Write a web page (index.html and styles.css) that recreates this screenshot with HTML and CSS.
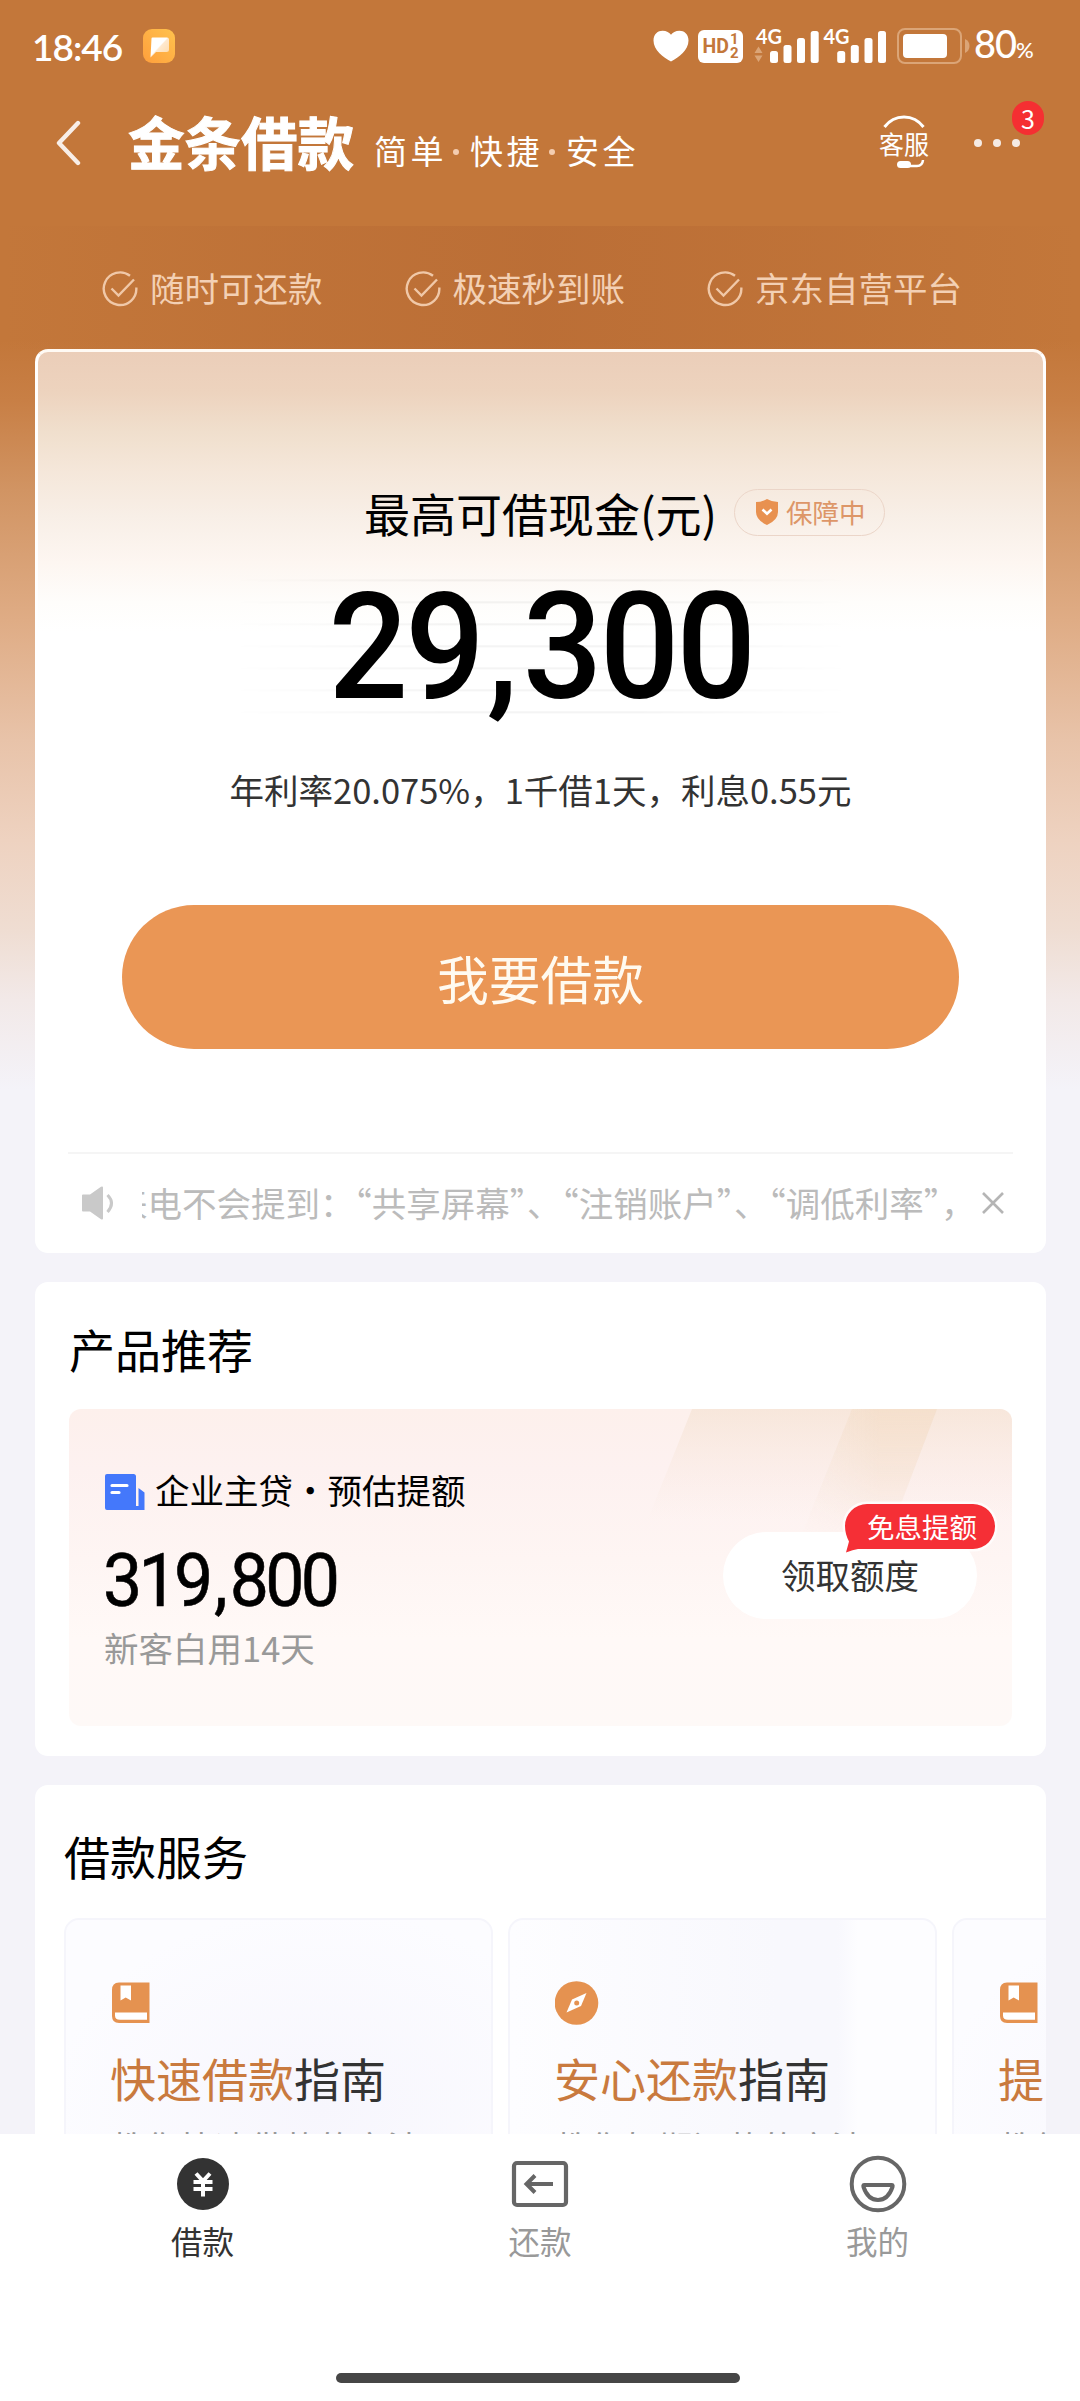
FILE: index.html
```html
<!DOCTYPE html>
<html lang="zh-CN">
<head>
<meta charset="utf-8">
<title>金条借款</title>
<link rel="stylesheet" href="styles.css">
</head>
<body>
<div class="screen">
  <main class="page">
    <div class="status">
      <span class="clock">18:46</span>
      <svg class="app-icon" width="32" height="34" viewBox="0 0 32 34">
        <defs>
          <linearGradient id="app" x1="0" y1="1" x2="1" y2="0"><stop offset="0" stop-color="#ff9f3c"/><stop offset="1" stop-color="#ffc24d"/></linearGradient>
          <linearGradient id="bub" x1="0" y1="0" x2="1" y2="1"><stop offset=".45" stop-color="#fff"/><stop offset=".5" stop-color="#ffe9cf"/><stop offset="1" stop-color="#ffd9a5"/></linearGradient>
        </defs>
        <rect width="32" height="34" rx="9" fill="url(#app)"/>
        <path d="M8.500 9.500Q8.500 8.500 9.500 8.500H24Q26 8.500 26 10.500V20.500Q26 23 23.500 23H13L7.500 28.500Z" fill="url(#bub)"/>
      </svg>
      <div class="status-right">
        <svg width="36" height="32" viewBox="0 0 36 32"><path d="M18 31.500C10 27.500 .5 20 .5 10.500C.5 4 5 .8 9.500 .8C13.500 .8 16.500 2.800 18 4.800C19.500 2.800 22.500 .8 26.500 .8C31 .8 35.500 4 35.500 10.500C35.500 20 26 27.500 18 31.500Z" fill="#fff"/></svg>
        <div class="hd"><span>HD</span><span class="hd-num"><i>1</i><i>2</i></span></div>
        <svg class="signals" width="133" height="36" viewBox="0 0 133 36">
          <g fill="#fff">
            <text class="net" x="2" y="16" textLength="26" lengthAdjust="spacingAndGlyphs">4G</text>
            <rect x="16" y="23" width="8" height="12" rx="2.500"/><rect x="29.500" y="17" width="8" height="18" rx="2.500"/><rect x="43" y="10" width="8" height="25" rx="2.500"/><rect x="56.700" y="3" width="8" height="32" rx="2.500"/>
            <text class="net" x="69.500" y="16" textLength="26" lengthAdjust="spacingAndGlyphs">4G</text>
            <rect x="83.200" y="23" width="8" height="12" rx="2.500"/><rect x="96.800" y="17" width="8" height="18" rx="2.500"/><rect x="110.500" y="10" width="8" height="25" rx="2.500"/><rect x="124" y="3" width="8" height="32" rx="2.500"/>
          </g>
          <path d="M4.500 18.500L8.500 25H.5ZM4.500 34L.5 27.500H8.500Z" fill="#dba577"/>
        </svg>
        <svg class="battery" width="73" height="36" viewBox="0 0 73 36">
          <rect x="1" y="1" width="63" height="34" rx="7" fill="none" stroke="#dba577" stroke-width="2"/>
          <rect x="6" y="6" width="44" height="24" rx="4" fill="#fff"/>
          <path d="M68 11Q72.500 13 72.500 18T68 25Z" fill="#dba577"/>
        </svg>
        <span class="percent">80<small>%</small></span>
      </div>
    </div>

    <header class="header">
      <svg class="back" width="26" height="46" viewBox="0 0 26 46"><path d="M23 3L4 23L23 43" fill="none" stroke="#f8eee7" stroke-width="4.400" stroke-linecap="round" stroke-linejoin="round"/></svg>
      <h1>金条借款</h1>
      <p class="slogan">简单<i></i>快捷<i></i>安全</p>
      <div class="service">
        <svg width="42" height="13" viewBox="0 0 42 13"><path d="M1.500 12Q9 2 21 2T40.500 12" fill="none" stroke="#fff" stroke-width="3"/></svg>
        <span>客服</span>
        <svg width="42" height="9" viewBox="0 0 42 9"><path d="M18 6H34Q39.500 6 40 0" fill="none" stroke="#fff" stroke-width="2.500"/><rect x="14" y="1" width="14" height="7" rx="3.500" fill="#fff"/></svg>
      </div>
      <div class="more"><i></i><i></i><i></i><b>3</b></div>
    </header>

    <ul class="features">
      <li><svg width="36" height="36" viewBox="0 0 36 36"><path d="M28 4.800A16.300 16.300 0 1 0 34.300 16.500M9.500 17.500L16.500 24.500L32 8.500"/></svg>随时可还款</li>
      <li><svg width="36" height="36" viewBox="0 0 36 36"><path d="M28 4.800A16.300 16.300 0 1 0 34.300 16.500M9.500 17.500L16.500 24.500L32 8.500"/></svg>极速秒到账</li>
      <li><svg width="36" height="36" viewBox="0 0 36 36"><path d="M28 4.800A16.300 16.300 0 1 0 34.300 16.500M9.500 17.500L16.500 24.500L32 8.500"/></svg>京东自营平台</li>
    </ul>

    <section class="card quota">
      <div class="quota-title">
        <h2>最高可借现金(元)</h2>
        <span class="guard"><svg width="24" height="26" viewBox="0 0 24 26"><path d="M1 3Q7 3 12 0Q17 3 23 3V13Q23 21 12 26Q1 21 1 13Z" fill="#e89150"/><path d="M7.500 10.500L12 14.800L16.500 10.500" fill="none" stroke="#fff" stroke-width="2.600"/></svg>保障中</span>
      </div>
      <div class="amount"><span class="digits">29<span class="comma">,</span>300</span></div>
      <p class="rate">年利率20.075%，1千借1天，利息0.55元</p>
      <a class="borrow">我要借款</a>
      <div class="notice">
        <svg class="speaker" width="36" height="34" viewBox="0 0 36 34"><path d="M1 9.500Q1 8.500 2 8.500H9L20 .8Q22 0 22 1.500V32.500Q22 34 20 33.200L9 25.500H2Q1 25.500 1 24.500Z" fill="#c9c9c9"/><path d="M26.500 9Q34.500 17 26.500 26" fill="none" stroke="#c9c9c9" stroke-width="3"/></svg>
        <div class="marquee"><span>来电不会提到：<q>“</q>共享屏幕<q>”</q>、<q>“</q>注销账户<q>”</q>、<q>“</q>调低利率<q>”</q>，</span></div>
        <svg class="close" width="24" height="24" viewBox="0 0 24 24"><path d="M2 2L22 22M22 2L2 22" stroke="#b5b5b5" stroke-width="2.600"/></svg>
      </div>
    </section>

    <section class="card products">
      <h2>产品推荐</h2>
      <div class="banner">
        <svg class="rays" width="430" height="150" viewBox="0 0 430 150">
          <defs>
            <linearGradient id="ray" x1="0" y1="0" x2="0" y2="1"><stop offset="0" stop-color="#efd9c2" stop-opacity=".4"/><stop offset=".75" stop-color="#f6e3d3" stop-opacity="0"/></linearGradient>
            <linearGradient id="ray2" x1="0" y1="0" x2="1" y2="0"><stop offset="0" stop-color="#f3dfca" stop-opacity=".1"/><stop offset=".6" stop-color="#f3dcc6" stop-opacity=".7"/></linearGradient>
            <linearGradient id="fade" x1="0" y1="0" x2="0" y2="1"><stop offset="0" stop-color="#fff"/><stop offset=".9" stop-color="#000"/></linearGradient>
            <mask id="down"><rect width="430" height="150" fill="url(#fade)"/></mask>
          </defs>
          <path d="M110 0H430V150H50Z" fill="url(#ray)"/>
          <path d="M270 0H355L298 150H210Z" fill="url(#ray2)" mask="url(#down)"/>
        </svg>
        <div class="offer">
          <p class="offer-name"><svg width="40" height="36" viewBox="0 0 40 36"><path d="M0 2Q0 0 2 0H28.500Q31 0 31 2.500V32H33.500V14L39.500 18.500V36H2Q0 36 0 34Z" fill="#4478fb"/><path d="M7 11.500H22M7 18.500H14" stroke="#fff" stroke-width="3.200" stroke-linecap="round"/></svg>企业主贷・预估提额</p>
          <p class="offer-sum">319<span class="comma">,</span>800</p>
          <p class="offer-note">新客白用14天</p>
        </div>
        <a class="claim">领取额度
          <span class="bubble"><svg width="156" height="54" viewBox="0 0 156 54"><path d="M25 3H131A22 22.500 0 0 1 131 48H16Q11 48.500 4 51.500Q5.500 46 7 40.500Q3 33 3 25A22 22 0 0 1 25 3Z" fill="#f52f36" stroke="#fff" stroke-opacity=".75" stroke-width="5" paint-order="stroke"/></svg><em>免息提额</em></span>
        </a>
      </div>
    </section>

    <section class="card services">
      <h2>借款服务</h2>
      <div class="guides">
        <article class="guide">
          <svg width="44" height="44" viewBox="0 0 44 44"><path d="M8 1.500H38.500V42H8Q1 42 1 35V9Q1 1.500 8 1.500Z" fill="#e59250"/><path d="M9.500 4.500H20V19.500L14.700 16.500L9.500 19.500ZM4 31.500H36V38.800H9Q4 38.800 4 34.500Z" fill="#fff"/></svg>
          <h3><b>快速借款</b>指南</h3><p>教你快速借款的方法</p>
        </article>
        <article class="guide alt">
          <svg width="44" height="44" viewBox="0 0 44 44"><circle cx="21.500" cy="22" r="21.800" fill="#e59250"/><path d="M31.500 12L26 25L11.500 31.500L17 18.500Z" fill="#fff"/><circle cx="21.700" cy="22" r="2.500" fill="#e59250"/></svg>
          <h3><b>安心还款</b>指南</h3><p>教你如期还款的方法</p>
        </article>
        <article class="guide">
          <svg width="44" height="44" viewBox="0 0 44 44"><path d="M8 1.500H38.500V42H8Q1 42 1 35V9Q1 1.500 8 1.500Z" fill="#e59250"/><path d="M9.500 4.500H20V19.500L14.700 16.500L9.500 19.500ZM4 31.500H36V38.800H9Q4 38.800 4 34.500Z" fill="#fff"/></svg>
          <h3><b>提</b></h3><p>教你</p>
        </article>
      </div>
    </section>
  </main>

  <nav class="tabbar">
    <div class="tabs">
      <a class="tab active"><svg width="58" height="58" viewBox="0 0 58 58"><circle cx="29" cy="29" r="26" fill="#333"/><path d="M22 18.500L29 26L36 18.500M29 26V41.500M19.500 27H38.500M19.500 34H38.500" fill="none" stroke="#fff" stroke-width="4"/></svg>借款</a>
      <a class="tab"><svg width="58" height="58" viewBox="0 0 58 58"><rect x="3" y="8" width="52" height="42" rx="3" fill="none" stroke="#666" stroke-width="4.200"/><path d="M16 29H42M24 20.500L15.500 29L24 37.500" fill="none" stroke="#666" stroke-width="4"/></svg>还款</a>
      <a class="tab"><svg width="58" height="58" viewBox="0 0 58 58"><circle cx="29" cy="29" r="26.300" fill="none" stroke="#666" stroke-width="4"/><path d="M15 30H43Q44 30 43.500 32Q39 45 29 45T14.500 32Q14 30 15 30Z" fill="none" stroke="#666" stroke-width="4"/></svg>我的</a>
    </div>
    <div class="home"></div>
  </nav>
</div>
</body>
</html>
```
FILE: styles.css
```css
* { box-sizing: border-box; margin: 0; padding: 0; }
body { font-family: "Noto Sans CJK SC", sans-serif; color: #000; }
i, em { font-style: normal; }
svg { display: block; flex: none; }
h1, h2, h3 { font-weight: 400; }
ul { list-style: none; }
q { quotes: none; }

.screen { width: 1080px; height: 2401px; display: flex; flex-direction: column; overflow: hidden; background: #fff; }
.page {
  height: 2134px; flex: none; overflow: hidden;
  background:
    linear-gradient(180deg, #c3773a 0, #c3773a 340px, #c87f45 400px, #d19463 490px, #dfac85 620px, #e8c3a9 740px, #eed2c0 840px, #efddd2 930px, #f2e9e8 1000px, #f4f3f9 1090px, #f4f3f9 100%);
}

/* status bar */
.status { height: 92px; display: flex; align-items: center; padding: 0 43px 0 32px; color: #fff; font-family: Lato, sans-serif; }
.clock { font-size: 37px; line-height: 44px; font-weight: 600; letter-spacing: -1px; width: 111px; margin-top: 1px; }
.status-right { margin-left: auto; display: flex; align-items: center; }
.hd { width: 45px; height: 33px; margin: 0 11px 0 9px; border-radius: 6px; background: #fff; color: #c3773a; display: flex; align-items: center; justify-content: center; font: 700 19.500px/33px Roboto, sans-serif; }
.hd-num { display: flex; flex-direction: column; font-size: 15px; line-height: 14px; margin-left: 1px; }
.signals { overflow: visible; }
.net { font: 700 20px Lato, sans-serif; }
.battery { margin: 0 4px 0 10px; }
.percent { font-size: 38px; line-height: 44px; font-weight: 500; letter-spacing: -1px; white-space: nowrap; width: 63px; }
.percent small { font-size: 22px; }

/* title bar */
.header { height: 104px; display: flex; align-items: center; padding: 0 60px 0 55px; color: #fff; }
.back { margin-top: -2px; }
.header h1 { font-size: 56.500px; line-height: 70px; font-weight: 700; -webkit-text-stroke: 1px #fff; margin: -9px 0 0 47px; white-space: nowrap; }
.slogan { font-size: 33px; line-height: 44px; letter-spacing: 3.500px; margin: 11px 0 0 20px; display: flex; align-items: center; white-space: nowrap; }
.slogan i { width: 6px; height: 6px; border-radius: 3px; background: #f4cdb0; margin: 4px 11px 0 6px; }
.service { width: 50px; margin-left: auto; display: flex; flex-direction: column; align-items: center; margin-top: -5px; }
.service span { font-size: 25px; line-height: 32px; margin-top: -1px; }
.service svg + span + svg { margin-top: 1px; }
.more { position: relative; width: 46px; height: 50px; display: flex; align-items: center; gap: 11px; margin: -2px 0 0 45px; }
.more i { width: 8px; height: 8px; border-radius: 4px; background: #f5ebe4; flex: none; }
.more b { position: absolute; left: 38px; top: -17px; width: 32px; height: 34px; border-radius: 17px; background: #f52f32; font: 400 25px/34px "Noto Sans CJK SC", sans-serif; text-align: center; }

/* selling points */
.features {
  height: 153px; padding: 66px 0 0 102px; display: grid; grid-template-columns: 302.500px 302.500px 1fr; color: #f3d0b4;
  background: linear-gradient(90deg, rgba(160,80,40,0) 0, rgba(160,80,40,.12) 25%, rgba(160,80,40,.22) 50%, rgba(160,80,40,.12) 75%, rgba(160,80,40,0) 100%) 0 30px no-repeat;
}
.features li { display: flex; gap: 12px; align-items: center; height: 50px; font-size: 34.500px; line-height: 50px; }
.features svg { margin-top: 3px; fill: none; stroke: #f0c8a8; stroke-width: 2.400; }

.card { width: 1011px; margin: 0 34px 29px 35px; border-radius: 13px; background: #fff; overflow: hidden; }
.card h2 { font-size: 46px; line-height: 60px; }

/* quota */
.quota { height: 904px; border: 3px solid #fffaf4; border-color: #fffaf4 #fff #fff; padding: 130px 30px 0; background: linear-gradient(180deg, #ebceb9 0, #edd3be 40px, #f0dfcd 80px, #f5e7da 120px, #f8efe7 165px, #fdf6f1 210px, #fefdfb 250px, #fff 280px); }
.quota-title { height: 60px; display: grid; grid-template-columns: 1fr auto 1fr; align-items: center; }
.quota-title::before { content: ""; }
.guard { justify-self: start; margin: 0 0 0 17px; width: 151px; height: 47px; border: 1.500px solid #ebd5c8; border-radius: 24px; display: flex; align-items: center; gap: 7px; padding-left: 20px; font-size: 26.500px; line-height: 42px; color: #dd9668; white-space: nowrap; }
.amount {
  position: relative; margin: 30px auto 0; width: 620px; height: 150px; display: flex; justify-content: center; white-space: nowrap;
  font: 500 149px/150px Roboto, sans-serif;
}
.amount::before {
  content: ""; position: absolute; inset: 0;
  background: repeating-linear-gradient(180deg, transparent 0, transparent 7px, rgba(0,0,0,.06) 8px, transparent 10px, transparent 22px);
  -webkit-mask-image: linear-gradient(90deg, transparent 0, #000 35%, #000 65%, transparent 100%);
  mask-image: linear-gradient(90deg, transparent 0, #000 35%, #000 65%, transparent 100%);
}
.digits { position: relative; letter-spacing: -3px; transform: scaleX(.94); }
.digits .comma { margin: 0 8px 0 5px; }
.rate { margin-top: 42px; font-size: 34.500px; line-height: 50px; text-align: center; color: #333; white-space: nowrap; }
.borrow { display: block; width: 837px; height: 144px; margin: 91px auto 0; border-radius: 72px; background: #ea9655; color: #fffaf0; font-size: 51.800px; line-height: 145px; text-align: center; }
.notice { margin: 103px 0 0; width: 945px; border-top: 2px solid #f5f5f5; height: 100px; display: flex; align-items: center; padding: 0 7px 0 13px; color: #bbb; }
.marquee { width: 825px; margin-left: 25px; overflow: hidden; font-size: 34.500px; line-height: 50px; white-space: nowrap; margin-top: -2px; }
.marquee span { margin-left: -29px; }
.marquee q { font-feature-settings: "halt"; }
.close { margin-left: 14px; }

/* products */
.products { height: 474px; padding: 36px 34px 0; }
.banner { position: relative; margin-top: 31px; height: 317px; border-radius: 12px; overflow: hidden; display: flex; justify-content: space-between; padding: 55px 35px 0 36px; background: linear-gradient(180deg, #fdf0ec 0, #fdf1f0 60px, #fef5f3 150px, #fff9f7 230px, #fef9f7 100%); }
.rays { position: absolute; right: 0; top: 0; }
.offer-name { display: flex; align-items: center; gap: 10px; height: 50px; font-size: 34.500px; line-height: 50px; white-space: nowrap; }
.offer-name svg { margin-top: 5px; }
.offer-sum { margin: 26px 0 2px -2px; font: 400 75px/80px Roboto, sans-serif; letter-spacing: -4px; -webkit-text-stroke: .6px #000; transform: scaleX(.93); transform-origin: 0 50%; }
.offer-sum .comma { margin: 0 6px 0 5px; }
.offer-note { font-size: 34.500px; line-height: 50px; color: #999; margin-left: -1px; }
.claim { position: relative; margin-top: 68px; width: 254px; height: 87px; border-radius: 44px; background: #fff; text-align: center; font-size: 34.500px; line-height: 84px; color: #333; }
.bubble { position: absolute; left: 119px; top: -31px; width: 156px; height: 54px; }
.bubble svg { position: absolute; inset: 0; }
.bubble em { position: relative; display: block; padding-left: 25px; text-align: left; font-size: 27.500px; line-height: 50px; color: #fff; white-space: nowrap; }

/* services */
.services { height: 474px; padding: 40px 0 0 29px; }
.guides { display: flex; gap: 15px; margin-top: 33px; }
.guide { flex: none; width: 429px; height: 320px; border: 2px solid #f5f5fb; border-radius: 15px; padding: 61px 0 0 45px; background: radial-gradient(ellipse at 60% 60%, #f7f6fd 0, #fcfcff 75%); white-space: nowrap; }
.guide.alt { background: linear-gradient(90deg, #fdfdff 0, #f8f8fd 63%, #f8f8fd 77%, #fdfdff 82%); }
.guide h3 { font-size: 46px; line-height: 60px; margin: 22px 0 0 -1px; color: #333; }
.guide h3 b { font-weight: 400; color: #c97a3e; }
.guide p { margin-top: 14px; font-size: 34.500px; line-height: 50px; color: #999; }

/* bottom bar */
.tabbar { height: 267px; flex: none; background: #fff; display: flex; flex-direction: column; align-items: center; }
.tabs { width: 1012.500px; display: grid; grid-template-columns: repeat(3, 1fr); padding-top: 21px; }
.tab { display: flex; flex-direction: column; align-items: center; gap: 2px; font-size: 31.500px; line-height: 50px; color: #999; }
.tab.active { color: #333; }
.home { width: 404px; height: 10px; border-radius: 5px; background: #464646; margin: 108px 5px 0 0; }
```
